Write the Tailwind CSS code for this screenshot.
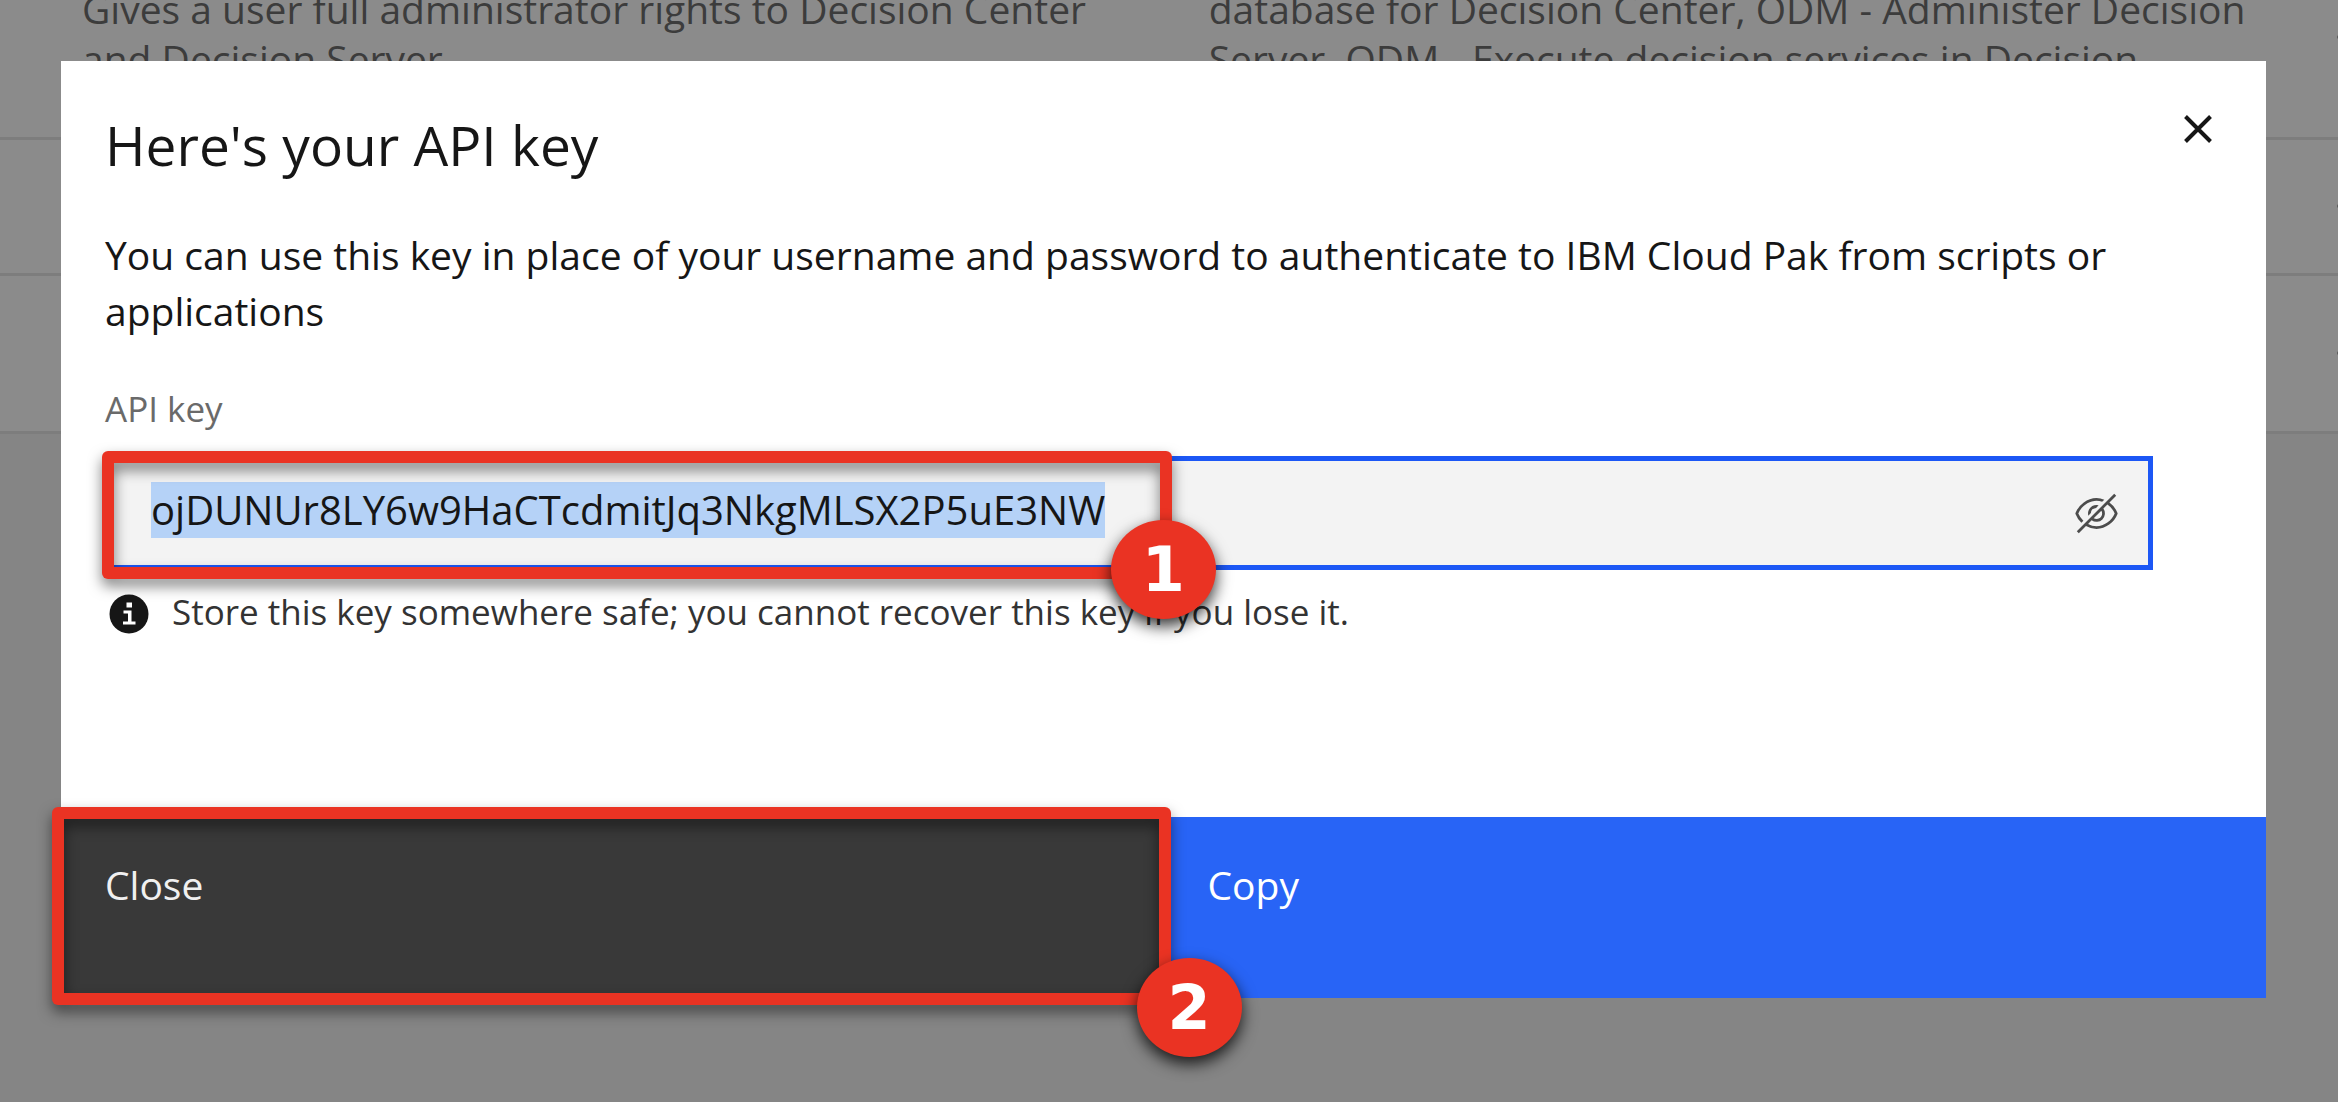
<!DOCTYPE html>
<html lang="en">
<head>
<meta charset="utf-8">
<title>API key</title>
<script src="https://cdn.jsdelivr.net/npm/@tailwindcss/browser@4"></script>
</head>
<body class="relative min-h-screen overflow-hidden bg-[#858585] font-['Open_Sans',sans-serif] text-[39px] leading-[56px] text-[#161616]">

<!-- Roles table behind the dialog -->
<div class="overflow-hidden" aria-hidden="true">
  <table class="-mt-4 w-full table-fixed border-collapse bg-[#8b8b8b] leading-[50px] text-[#3c3c3c]">
    <colgroup><col class="w-[51.7%]"><col><col class="w-1"></colgroup>
    <tbody>
      <tr class="h-[154px] border-b-3 border-[#7d7d7d] align-top">
        <td class="pl-[82px]">Gives a user full administrator rights to Decision Center<br>and Decision Server</td>
        <td class="whitespace-nowrap">database for Decision Center, ODM - Administer Decision<br>Server, ODM - Execute decision services in Decision</td>
        <td class="pt-[51px]"><span class="ml-[3px] block h-1 w-1 rounded-full bg-[#5a5a5a]"></span></td>
      </tr>
      <tr class="h-[136px] border-b-3 border-[#7d7d7d]">
        <td></td><td></td>
        <td><span class="ml-[3px] block h-1 w-1 rounded-full bg-[#5a5a5a]"></span></td>
      </tr>
      <tr class="h-[158px] border-b-3 border-[#7d7d7d]">
        <td></td><td></td>
        <td><span class="ml-[3px] block h-1 w-1 rounded-full bg-[#5a5a5a]"></span></td>
      </tr>
    </tbody>
  </table>
</div>

<!-- Dialog -->
<div class="absolute inset-0 pt-[61px] pr-[72px] pl-[61px]">
  <section role="dialog" aria-labelledby="title" class="bg-white">
    <div class="px-11 pt-12 pb-[181px]">
      <header class="flex items-start justify-between">
        <h1 id="title" class="text-[55px] leading-[72px]">Here's your API key</h1>
        <button type="button" aria-label="Close dialog" class="mt-1.5 mr-2.5">
          <svg class="h-7 w-7" viewBox="0 0 28 28" fill="none" stroke="#161616" stroke-width="4"><path d="M1.5 1.5 26.500 26.500M26.500 1.500 1.500 26.500"/></svg>
        </button>
      </header>
      <p class="mt-[46px] mr-16">You can use this key in place of your username and password to authenticate to IBM Cloud Pak from scripts or applications</p>
      <label for="key" class="mt-[46px] block text-[35px] leading-[48px] text-[#6a6a6a]">API key</label>

      <div class="relative mt-[23px] mr-[69px] flex h-[114px] items-center border-[5px] border-[#1c57f5] bg-[#f3f3f3] pr-[29px] pl-[41px]">
        <input id="key" type="text" readonly value="ojDUNUr8LY6w9HaCTcdmitJq3NkgMLSX2P5uE3NW" class="min-w-0 flex-1 bg-transparent pb-1.5 text-[40px] outline-none selection:bg-[#b5d2f7] selection:text-[#161616]">
        <button type="button" aria-label="Hide API key">
          <svg class="h-[45px] w-[45px]" viewBox="0 0 32 32" fill="#4c4c4c"><path d="M5.240 22.510l1.430-1.420A14.060 14.060 0 0 1 3.070 16C5.100 10.930 10.700 7 16 7a12.380 12.380 0 0 1 4 .720l1.550-1.560A14.720 14.720 0 0 0 16 5 16.690 16.690 0 0 0 1.060 15.660a1 1 0 0 0 0 .680 16 16 0 0 0 4.180 6.170Z"/><path d="M12 15.730a4 4 0 0 1 3.700-3.700l1.810-1.820a6 6 0 0 0-7.330 7.330ZM30.940 15.660A16.400 16.400 0 0 0 25.200 8.220L30 3.410 28.590 2 2 28.590 3.410 30l5.100-5.100A15.290 15.290 0 0 0 16 27 16.690 16.690 0 0 0 30.940 16.340a1 1 0 0 0 0-.680ZM20 16a4 4 0 0 1-6 3.440L19.440 14A4 4 0 0 1 20 16ZM16 25a13.050 13.050 0 0 1-6-1.580l2.540-2.540a6 6 0 0 0 8.350-8.350l2.870-2.870A14.540 14.540 0 0 1 28.930 16C26.900 21.070 21.300 25 16 25Z"/></svg>
        </button>
        <!-- Step 1 marker -->
        <div class="pointer-events-none absolute -top-2.5 -left-2 z-10 h-32 w-[52.500%] drop-shadow-[0_7px_7px_rgba(0,0,0,0.5)]">
          <div class="h-full w-full rounded-[6px] bg-[linear-gradient(#ea3323,#ea3323),linear-gradient(#ea3323,#ea3323),linear-gradient(#ea3323,#ea3323),linear-gradient(#ea3323,#ea3323)] bg-[size:100%_12px,100%_12px,12px_100%,12px_100%] bg-[position:top,bottom,left,right] bg-no-repeat"></div>
        </div>
        <div class="pointer-events-none absolute top-[59px] left-[52.500%] z-20 -ml-[69px] flex h-[99px] w-[105px] items-center justify-center rounded-[50%] bg-[#ea3323] font-['DejaVu_Sans',sans-serif] text-[62px] leading-none font-bold text-white drop-shadow-[0_7px_8px_rgba(0,0,0,0.8)]">1</div>
      </div>

      <p class="mt-[18px] flex items-center gap-[23px] pl-1 text-[35px] leading-[48px] text-[#333333]">
        <svg class="mt-1 h-10 w-10 shrink-0" viewBox="0 0 40 40" aria-hidden="true"><circle cx="20" cy="20" r="19.500" fill="#161616"/><path fill="#fff" d="M17.500 8.500h5.500v5h-5.500zM14.500 16.500h8v11h4v3H14v-3h5v-8h-4.500z"/></svg>
        Store this key somewhere safe; you cannot recover this key if you lose it.
      </p>
    </div>

    <footer class="relative grid grid-cols-2 text-white">
      <button type="button" class="h-[181px] bg-[#393939] px-11 pt-10 pb-[85px] text-left text-[#f0f0f0]">Close</button>
      <button type="button" class="h-[181px] bg-[#2864f6] px-11 pt-10 pb-[85px] text-left">Copy</button>
      <!-- Step 2 marker -->
      <div class="pointer-events-none absolute -top-2.5 right-1/2 -left-[9px] z-10 -mr-[7px] h-[198px] drop-shadow-[0_7px_7px_rgba(0,0,0,0.5)]">
        <div class="h-full w-full rounded-[6px] bg-[linear-gradient(#ea3323,#ea3323),linear-gradient(#ea3323,#ea3323),linear-gradient(#ea3323,#ea3323),linear-gradient(#ea3323,#ea3323)] bg-[size:100%_12px,100%_12px,12px_100%,12px_100%] bg-[position:top,bottom,left,right] bg-no-repeat"></div>
      </div>
      <div class="pointer-events-none absolute top-[141px] left-1/2 z-20 -ml-[27px] flex h-[99px] w-[105px] items-center justify-center rounded-[50%] bg-[#ea3323] font-['DejaVu_Sans',sans-serif] text-[62px] leading-none font-bold text-white drop-shadow-[0_7px_8px_rgba(0,0,0,0.8)]">2</div>
    </footer>
  </section>
</div>

<script>
  const key = document.getElementById('key');
  key.focus();
  key.select();
</script>
</body>
</html>
